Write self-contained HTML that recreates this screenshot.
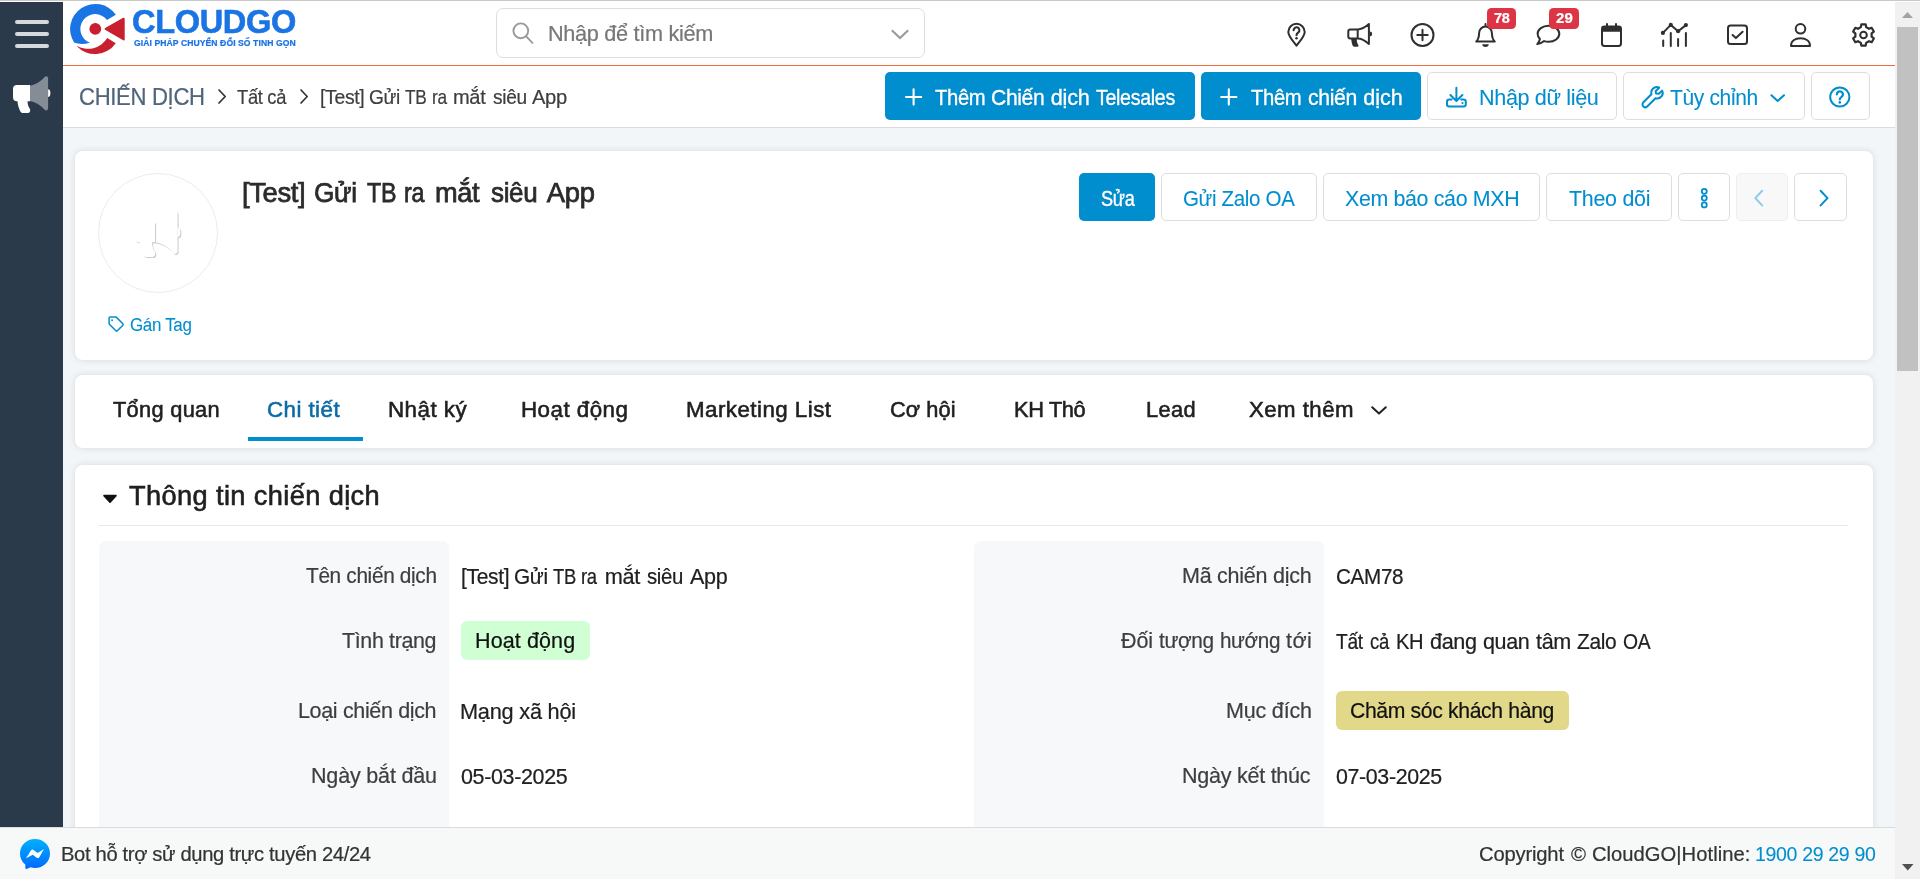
<!DOCTYPE html>
<html lang="vi">
<head>
<meta charset="utf-8">
<title>CloudGO - Chiến dịch</title>
<style>
*{box-sizing:border-box;margin:0;padding:0}
html,body{width:1920px;height:879px;overflow:hidden;background:#f3f6f9}
body{position:relative;font-family:"Liberation Sans",sans-serif}
section,header,nav,footer,aside,main{display:block}
h1,h2{font-weight:400}
a{text-decoration:none}
.a{position:absolute}
.t{position:absolute;white-space:nowrap;display:block;transform-origin:0 50%;-webkit-text-stroke:0.22px currentColor}
.w{display:inline-block;width:0;overflow:visible;white-space:nowrap;transform-origin:0 50%}
svg{position:absolute;overflow:visible}
.card{position:absolute;background:#fff;border-radius:8px;box-shadow:0 0 7px rgba(10,5,0,.12)}
.btn{position:absolute;border-radius:5px;height:48px}
.btn.p{background:#008ecf}
.btn.o{background:#fff;border:1px solid #dedede}
.ic{fill:none;stroke:#2f2f2f;stroke-width:2;stroke-linecap:round;stroke-linejoin:round}
.ib{fill:none;stroke:#008ecf;stroke-width:2;stroke-linecap:round;stroke-linejoin:round}
.dsh{fill:#000;fill-opacity:.2;transform:translate(0.85px,0.85px);filter:blur(0.45px)}
.sh{text-shadow:0 1px 1px rgba(0,40,70,.22)}
.badge{position:absolute;background:#dc3545;border-radius:4.5px}
</style>
</head>
<body>

<!-- page background / content area -->
<main>
  <!-- CARD 1 : record header -->
  <section>
    <div class="card" style="left:75px;top:151px;width:1798px;height:209px"></div>
    <div class="a" style="left:98px;top:173px;width:120px;height:120px;border-radius:50%;border:1px solid #ececec;background:#fff"></div>
    <svg style="left:0;top:0" width="260" height="300" viewBox="0 0 260 300">
      <g transform="translate(134 211) scale(1.24) translate(-13 -75.9)">
        <g class="dsh"><path d="M48.1 89.2 A2.3 3.9 0 0 1 48.1 97 Z"/><path d="M30 85.4 C35.5 84.8 40.5 81.5 44.6 76.9 C45.9 75.4 48.1 76.3 48.1 78.3 V108.3 C48.1 110.3 45.9 111.2 44.6 109.7 C40.5 105.1 35.5 101.8 30 101.2 Z"/></g>
        <g fill="#fff"><path d="M48.1 89.2 A2.3 3.9 0 0 1 48.1 97 Z"/><path d="M30 85.4 C35.5 84.8 40.5 81.5 44.6 76.9 C45.9 75.4 48.1 76.3 48.1 78.3 V108.3 C48.1 110.3 45.9 111.2 44.6 109.7 C40.5 105.1 35.5 101.8 30 101.2 Z"/></g>
        <g class="dsh"><path d="M17 85.1 H30 V101.2 H27.6 C27.4 104 28.3 106.4 29.8 108.7 C30.9 110.5 29.8 113 27.6 113 H23 C21.7 113 20.8 112.3 20.3 111.2 C18.9 108.1 17.7 104.9 17.5 101.2 H17 A4 4 0 0 1 13 97.2 V89.1 A4 4 0 0 1 17 85.1 Z"/></g>
        <g fill="#fff"><path d="M17 85.1 H30 V101.2 H27.6 C27.4 104 28.3 106.4 29.8 108.7 C30.9 110.5 29.8 113 27.6 113 H23 C21.7 113 20.8 112.3 20.3 111.2 C18.9 108.1 17.7 104.9 17.5 101.2 H17 A4 4 0 0 1 13 97.2 V89.1 A4 4 0 0 1 17 85.1 Z"/></g>
      </g>
    </svg>
    <h1 class="t" style="left:241.50px;top:178.80px;font-size:27.4px;line-height:27.4px;color:#2b2b2b;-webkit-text-stroke:0.75px #2b2b2b;transform:scaleX(0.9999);"><span class="w" style="letter-spacing:-0.349px;">[Test]</span> <span class="w" style="letter-spacing:-0.350px;transform:scaleX(0.9548);margin-left:64.03px;">Gửi</span> <span class="w" style="letter-spacing:-0.350px;transform:scaleX(0.8500);margin-left:45.44px;">TB</span> <span class="w" style="letter-spacing:-0.350px;transform:scaleX(0.8500);margin-left:29.54px;">ra</span> <span class="w" style="letter-spacing:-0.350px;transform:scaleX(0.9921);margin-left:23.85px;">mắt</span> <span class="w" style="letter-spacing:-0.350px;transform:scaleX(0.9486);margin-left:47.88px;">siêu</span> <span class="w" style="letter-spacing:-0.301px;margin-left:48.39px;">App</span></h1>
    <svg style="left:0;top:0" width="260" height="345" viewBox="0 0 260 345"><path d="M110.1 317.1 H116.2 L122.9 323.8 A1 1 0 0 1 122.9 325.2 L117.3 330.8 A1 1 0 0 1 115.9 330.8 L109.1 324 V318.1 A1 1 0 0 1 110.1 317.1 Z" fill="none" stroke="#008ecf" stroke-width="1.5" stroke-linejoin="round"/><circle cx="112.1" cy="320.2" r="0.95" fill="#008ecf"/></svg>
    <a class="t" style="left:129.90px;top:315.56px;font-size:18px;line-height:18px;color:#008ecf;-webkit-text-stroke:0.08px #008ecf;letter-spacing:-0.350px;transform:scaleX(0.9425);">Gán Tag</a>
    <div class="btn p" style="left:1079px;top:173px;width:76px"></div><span class="t sh" style="left:1100.60px;top:188.78px;font-size:21.4px;line-height:21.4px;color:#ffffff;-webkit-text-stroke:0.35px #ffffff;letter-spacing:-0.350px;transform:scaleX(0.8500);">Sửa</span>
    <div class="btn o" style="left:1161px;top:173px;width:156px"></div><span class="t" style="left:1182.79px;top:188.78px;font-size:21.4px;line-height:21.4px;color:#008ecf;-webkit-text-stroke:0.08px #008ecf;letter-spacing:-0.350px;transform:scaleX(0.9588);">Gửi Zalo OA</span>
    <div class="btn o" style="left:1323px;top:173px;width:217px"></div><span class="t" style="left:1345.30px;top:188.78px;font-size:21.4px;line-height:21.4px;color:#008ecf;-webkit-text-stroke:0.08px #008ecf;letter-spacing:-0.350px;transform:scaleX(0.9999);">Xem báo cáo MXH</span>
    <div class="btn o" style="left:1546px;top:173px;width:126px"></div><span class="t" style="left:1568.70px;top:188.78px;font-size:21.4px;line-height:21.4px;color:#008ecf;-webkit-text-stroke:0.08px #008ecf;letter-spacing:-0.256px;transform:scaleX(0.9999);">Theo dõi</span>
    <div class="btn o" style="left:1678px;top:173px;width:52px"></div>
    <div class="btn o" style="left:1736px;top:173px;width:52px;background:#f8f8f8;border-color:#eeeeee"></div>
    <div class="btn o" style="left:1794px;top:173px;width:53px"></div>
    <svg style="left:0;top:0" width="1895" height="360" viewBox="0 0 1895 360">
    <circle cx="1704.25" cy="191.3" r="2.5" fill="none" stroke="#008ecf" stroke-width="1.8"/>
    <circle cx="1704.25" cy="198.1" r="2.5" fill="none" stroke="#008ecf" stroke-width="1.8"/>
    <circle cx="1704.25" cy="204.9" r="2.5" fill="none" stroke="#008ecf" stroke-width="1.8"/>
    <path d="M1762.2 190.8 L1755.3 198.1 L1762.2 205.4" fill="none" stroke="#8ccbec" stroke-width="2" stroke-linecap="round" stroke-linejoin="round"/>
    <path class="ib" d="M1820.6 190.8 L1827.5 198.1 L1820.6 205.4"/>
  </svg>
  </section>

  <!-- CARD 2 : tabs -->
  <nav>
    <div class="card" style="left:75px;top:375px;width:1798px;height:73px"></div>
    <a class="t" style="left:113.20px;top:398.54px;font-size:21.8px;line-height:21.8px;color:#202020;-webkit-text-stroke:0.55px #202020;letter-spacing:0.299px;transform:scaleX(0.9999);">Tổng quan</a><a class="t" style="left:267.48px;top:398.54px;font-size:21.8px;line-height:21.8px;color:#0b6aa6;-webkit-text-stroke:0.55px #0b6aa6;letter-spacing:0.450px;transform:scaleX(1.0224);">Chi tiết</a><a class="t" style="left:387.77px;top:398.54px;font-size:21.8px;line-height:21.8px;color:#202020;-webkit-text-stroke:0.55px #202020;letter-spacing:0.450px;transform:scaleX(1.0265);">Nhật ký</a><a class="t" style="left:520.67px;top:398.54px;font-size:21.8px;line-height:21.8px;color:#202020;-webkit-text-stroke:0.55px #202020;letter-spacing:0.450px;transform:scaleX(1.0258);">Hoạt động</a><a class="t" style="left:685.68px;top:398.54px;font-size:21.8px;line-height:21.8px;color:#202020;-webkit-text-stroke:0.55px #202020;letter-spacing:0.450px;transform:scaleX(1.0244);">Marketing List</a><a class="t" style="left:889.80px;top:398.54px;font-size:21.8px;line-height:21.8px;color:#202020;-webkit-text-stroke:0.55px #202020;letter-spacing:0.073px;transform:scaleX(0.9999);">Cơ hội</a><a class="t" style="left:1014.20px;top:398.54px;font-size:21.8px;line-height:21.8px;color:#202020;-webkit-text-stroke:0.55px #202020;letter-spacing:-0.350px;transform:scaleX(0.9999);">KH Thô</a><a class="t" style="left:1146.40px;top:398.54px;font-size:21.8px;line-height:21.8px;color:#202020;-webkit-text-stroke:0.55px #202020;letter-spacing:0.378px;transform:scaleX(0.9999);">Lead</a><a class="t" style="left:1249.20px;top:398.54px;font-size:21.8px;line-height:21.8px;color:#202020;-webkit-text-stroke:0.55px #202020;letter-spacing:0.450px;transform:scaleX(1.0195);">Xem thêm</a>
    <div class="a" style="left:248px;top:437px;width:115px;height:4px;background:#008ecf"></div>
    <svg style="left:1370px;top:404px" width="18" height="12" viewBox="0 0 18 12"><path d="M2.2 3.2 L9 9.6 L15.8 3.2" fill="none" stroke="#222" stroke-width="2" stroke-linecap="round" stroke-linejoin="round"/></svg>
  </nav>

  <!-- CARD 3 : detail block -->
  <section>
    <div class="card" style="left:75px;top:465px;width:1798px;height:420px"></div>
    <svg style="left:102px;top:494px" width="16" height="10" viewBox="0 0 16 10"><path d="M2 1.6 H14 L8 8.2 Z" fill="#111" stroke="#111" stroke-width="1.6" stroke-linejoin="round"/></svg>
    <h2 class="t" style="left:129.00px;top:481.77px;font-size:27.2px;line-height:27.2px;color:#202020;-webkit-text-stroke:0.6px #202020;letter-spacing:0.389px;transform:scaleX(0.9999);">Thông tin chiến dịch</h2>
    <div class="a" style="left:99px;top:525px;width:1749px;height:1px;background:#e6e8ea"></div>
    <div class="a" style="left:99px;top:541px;width:350px;height:300px;background:#f7f8fa;border-radius:7px 7px 0 0"></div>
    <div class="a" style="left:974px;top:541px;width:350px;height:300px;background:#f7f8fa;border-radius:7px 7px 0 0"></div>
    <label class="t" style="left:305.60px;top:565.80px;font-size:21.5px;line-height:21.5px;color:#3e3e3e;letter-spacing:-0.350px;transform:scaleX(0.9685);">Tên chiến dịch</label><label class="t" style="left:342.20px;top:630.80px;font-size:21.5px;line-height:21.5px;color:#3e3e3e;letter-spacing:-0.350px;transform:scaleX(0.9958);">Tình trạng</label><label class="t" style="left:298.10px;top:700.80px;font-size:21.5px;line-height:21.5px;color:#3e3e3e;letter-spacing:-0.348px;transform:scaleX(0.9999);">Loại chiến dịch</label><label class="t" style="left:310.60px;top:765.80px;font-size:21.5px;line-height:21.5px;color:#3e3e3e;letter-spacing:-0.167px;transform:scaleX(0.9999);">Ngày bắt đầu</label>
    <span class="t" style="left:461.03px;top:565.63px;font-size:21.7px;line-height:21.7px;color:#202020;transform:scaleX(0.9999);"><span class="w" style="letter-spacing:-0.350px;transform:scaleX(0.9678);">[Test]</span> <span class="w" style="letter-spacing:-0.350px;transform:scaleX(0.9588);margin-left:47.18px;">Gửi</span> <span class="w" style="letter-spacing:-0.350px;transform:scaleX(0.8500);margin-left:32.83px;">TB</span> <span class="w" style="letter-spacing:-0.350px;transform:scaleX(0.8500);margin-left:22.32px;">ra</span> <span class="w" style="letter-spacing:-0.314px;margin-left:17.32px;">mắt</span> <span class="w" style="letter-spacing:-0.350px;transform:scaleX(0.9397);margin-left:36.67px;">siêu</span> <span class="w" style="letter-spacing:-0.350px;transform:scaleX(0.9940);margin-left:36.07px;">App</span></span>
    <div class="a" style="left:461px;top:621px;width:129px;height:39px;border-radius:6px;background:#d0ffd4"></div><span class="t" style="left:475.40px;top:630.80px;font-size:21.5px;line-height:21.5px;color:#111111;letter-spacing:0.118px;transform:scaleX(0.9999);">Hoạt động</span>
    <span class="t" style="left:459.80px;top:700.63px;font-size:21.7px;line-height:21.7px;color:#202020;letter-spacing:-0.203px;transform:scaleX(0.9999);">Mạng xã hội</span><span class="t" style="left:460.80px;top:765.63px;font-size:21.7px;line-height:21.7px;color:#202020;letter-spacing:-0.350px;transform:scaleX(0.9896);">05-03-2025</span>
    <label class="t" style="left:1182.10px;top:565.80px;font-size:21.5px;line-height:21.5px;color:#3e3e3e;letter-spacing:-0.241px;transform:scaleX(0.9999);">Mã chiến dịch</label><label class="t" style="left:1120.50px;top:630.80px;font-size:21.5px;line-height:21.5px;color:#3e3e3e;transform:scaleX(0.9999);"><span class="w" style="letter-spacing:-0.089px;">Đối</span> <span class="w" style="letter-spacing:-0.350px;transform:scaleX(0.9676);margin-left:32.43px;">tượng</span> <span class="w" style="letter-spacing:-0.350px;transform:scaleX(0.9590);margin-left:54.37px;">hướng</span> <span class="w" style="letter-spacing:0.450px;transform:scaleX(1.0051);margin-left:60.59px;">tới</span></label><label class="t" style="left:1225.90px;top:700.80px;font-size:21.5px;line-height:21.5px;color:#3e3e3e;letter-spacing:-0.182px;transform:scaleX(0.9999);">Mục đích</label><label class="t" style="left:1182.10px;top:765.80px;font-size:21.5px;line-height:21.5px;color:#3e3e3e;letter-spacing:-0.242px;transform:scaleX(0.9999);">Ngày kết thúc</label>
    <span class="t" style="left:1335.75px;top:565.63px;font-size:21.7px;line-height:21.7px;color:#202020;letter-spacing:-0.350px;transform:scaleX(0.9520);">CAM78</span><span class="t" style="left:1336.20px;top:630.63px;font-size:21.7px;line-height:21.7px;color:#202020;transform:scaleX(0.9999);"><span class="w" style="letter-spacing:-0.350px;transform:scaleX(0.8834);">Tất</span> <span class="w" style="letter-spacing:-0.350px;transform:scaleX(0.8530);margin-left:28.17px;">cả</span> <span class="w" style="letter-spacing:-0.350px;transform:scaleX(0.9271);margin-left:20.24px;">KH</span> <span class="w" style="letter-spacing:-0.350px;transform:scaleX(0.9958);margin-left:27.20px;">đang</span> <span class="w" style="letter-spacing:-0.350px;transform:scaleX(0.9914);margin-left:47.07px;">quan</span> <span class="w" style="letter-spacing:-0.350px;transform:scaleX(0.9957);margin-left:46.87px;">tâm</span> <span class="w" style="letter-spacing:-0.350px;transform:scaleX(0.9650);margin-left:35.37px;">Zalo</span> <span class="w" style="letter-spacing:-0.350px;transform:scaleX(0.8912);margin-left:39.88px;">OA</span></span>
    <div class="a" style="left:1336px;top:691px;width:233px;height:39px;border-radius:6px;background:#e2d88a"></div><span class="t" style="left:1350.32px;top:700.80px;font-size:21.5px;line-height:21.5px;color:#111111;letter-spacing:-0.350px;transform:scaleX(0.9841);">Chăm sóc khách hàng</span>
    <span class="t" style="left:1336.20px;top:765.63px;font-size:21.7px;line-height:21.7px;color:#202020;letter-spacing:-0.350px;transform:scaleX(0.9849);">07-03-2025</span>
  </section>
</main>

<!-- BREADCRUMB / ACTION BAR -->
<section>
  <div class="a" style="left:63px;top:66px;width:1832px;height:62px;background:#fff;border-bottom:1px solid #dbdcdd"></div>
  <a class="t" style="left:79.25px;top:86.26px;font-size:23.2px;line-height:23.2px;color:#50647a;letter-spacing:-0.350px;transform:scaleX(0.9539);">CHIẾN DỊCH</a><a class="t" style="left:237.20px;top:86.81px;font-size:20.3px;line-height:20.3px;color:#3e3e3e;letter-spacing:-0.350px;transform:scaleX(0.9037);">Tất cả</a><span class="t" style="left:319.54px;top:86.81px;font-size:20.3px;line-height:20.3px;color:#3e3e3e;transform:scaleX(0.9999);"><span class="w" style="letter-spacing:-0.350px;transform:scaleX(0.9583);">[Test]</span> <span class="w" style="letter-spacing:-0.350px;transform:scaleX(0.9446);margin-left:43.77px;">Gửi</span> <span class="w" style="letter-spacing:-0.350px;transform:scaleX(0.8500);margin-left:30.41px;">TB</span> <span class="w" style="letter-spacing:-0.350px;transform:scaleX(0.8500);margin-left:20.61px;">ra</span> <span class="w" style="letter-spacing:-0.350px;transform:scaleX(0.9885);margin-left:16.02px;">mắt</span> <span class="w" style="letter-spacing:-0.350px;transform:scaleX(0.9433);margin-left:34.05px;">siêu</span> <span class="w" style="letter-spacing:-0.350px;transform:scaleX(0.9941);margin-left:33.46px;">App</span></span>
  <svg style="left:216px;top:88px" width="12" height="17" viewBox="0 0 12 17"><path d="M3 2 L9.2 8.5 L3 15" fill="none" stroke="#333" stroke-width="1.7" stroke-linecap="round" stroke-linejoin="round"/></svg>
  <svg style="left:298.3px;top:88px" width="12" height="17" viewBox="0 0 12 17"><path d="M3 2 L9.2 8.5 L3 15" fill="none" stroke="#333" stroke-width="1.7" stroke-linecap="round" stroke-linejoin="round"/></svg>
  <div class="btn p" style="left:885px;top:72px;width:310px"></div><span class="t sh" style="left:935.00px;top:86.71px;font-size:21.6px;line-height:21.6px;color:#ffffff;-webkit-text-stroke:0.35px #ffffff;transform:scaleX(0.9999);"><span class="w" style="letter-spacing:-0.350px;transform:scaleX(0.9363);">Thêm</span> <span class="w" style="letter-spacing:-0.350px;transform:scaleX(0.9766);margin-left:49.92px;">Chiến</span> <span class="w" style="letter-spacing:-0.177px;margin-left:53.88px;">dịch</span> <span class="w" style="letter-spacing:-0.350px;transform:scaleX(0.9082);margin-left:39.20px;">Telesales</span></span>
  <div class="btn p" style="left:1201px;top:72px;width:220px"></div><span class="t sh" style="left:1250.60px;top:86.71px;font-size:21.6px;line-height:21.6px;color:#ffffff;-webkit-text-stroke:0.35px #ffffff;transform:scaleX(0.9999);"><span class="w" style="letter-spacing:-0.350px;transform:scaleX(0.9363);">Thêm</span> <span class="w" style="letter-spacing:-0.350px;transform:scaleX(0.9809);margin-left:50.90px;">chiến</span> <span class="w" style="letter-spacing:-0.035px;margin-left:49.40px;">dịch</span></span>
  <div class="btn o" style="left:1427px;top:72px;width:190px"></div><span class="t" style="left:1478.50px;top:86.71px;font-size:21.6px;line-height:21.6px;color:#008ecf;-webkit-text-stroke:0.08px #008ecf;letter-spacing:-0.350px;transform:scaleX(0.9999);">Nhập dữ liệu</span>
  <div class="btn o" style="left:1623px;top:72px;width:182px"></div><span class="t" style="left:1669.70px;top:86.71px;font-size:21.6px;line-height:21.6px;color:#008ecf;-webkit-text-stroke:0.08px #008ecf;letter-spacing:-0.350px;transform:scaleX(0.9721);">Tùy chỉnh</span>
  <div class="btn o" style="left:1811px;top:72px;width:59px"></div>
  <svg style="left:0;top:0" width="1895" height="128" viewBox="0 0 1895 128">
    <path d="M906 97 H921.2 M913.6 89.4 V104.6 M1221.2 97 H1236.4 M1228.8 89.4 V104.6" fill="none" stroke="#fff" stroke-width="2.1" stroke-linecap="round"/>
    <path class="ib" d="M1451.6 99.6 H1449.3 A2.3 2.3 0 0 0 1447 101.9 V104.2 A2.3 2.3 0 0 0 1449.3 106.5 H1463.5 A2.3 2.3 0 0 0 1465.8 104.2 V101.9 A2.3 2.3 0 0 0 1463.5 99.6 H1461.2 M1456.4 87.8 V100.6 M1450.4 95 L1456.4 101 L1462.4 95"/><circle cx="1462.5" cy="103.1" r="1.05" fill="#008ecf"/>
    <path class="ib" d="M1659.2 87.7 C1657.5 86.8 1655.3 87 1654 87.9 C1652 89.3 1650.8 91.5 1651.4 94.2 L1643.4 102.3 C1642.2 103.6 1642.2 105.3 1643.4 106.4 C1644.6 107.5 1646.3 107.5 1647.5 106.3 L1655.5 98.2 C1658.2 98.9 1660.6 97.8 1661.9 95.9 C1662.9 94.4 1663 92.3 1662.1 90.6 L1658.9 93.8 L1656 93.5 L1655.7 90.9 Z"/>
    <path class="ib" d="M1771.4 95.2 L1777.7 101 L1784 95.2"/>
    <circle class="ib" cx="1839.8" cy="97" r="9.6"/><path class="ib" style="stroke-width:2.3" d="M1836.9 94.4 A3 3 0 1 1 1841.6 96.8 C1840.5 97.6 1839.8 98.1 1839.8 99.3"/><circle cx="1839.8" cy="102.4" r="1.3" fill="#008ecf"/>
  </svg>
</section>

<!-- TOP BAR -->
<header>
  <div class="a" style="left:0;top:0;width:1920px;height:2px;background:#fff"></div>
  <div class="a" style="left:0;top:0;width:1920px;height:1px;background:#c9c9c9"></div>
  <div class="a" style="left:63px;top:2px;width:1832px;height:64px;background:#fff;border-bottom:1px solid #f26a38"></div>
  <svg style="left:0;top:0" width="140" height="66" viewBox="0 0 140 66">
  <path d="M115.82 14.66 A25.1 25.1 0 0 0 74.11 42.58 Q81 45.3 89.86 42.73 A14.8 14.8 0 1 1 106.98 20.00 Z" fill="#1b74e4"/>
  <path d="M76.40 45.70 A22.8 22.8 0 0 0 107.30 38.10 L115.77 43.23 A25.1 25.1 0 0 1 76.40 45.70 Z" fill="#c8202f"/>
  <circle cx="95.3" cy="28.95" r="5.9" fill="#c8202f"/>
  <path d="M105.6 28.9 L123.7 18.7 L123.7 39.4 Z" fill="#c8202f" stroke="#c8202f" stroke-width="2" stroke-linejoin="round"/>
</svg>
  <span class="t" style="left:132.23px;top:4.72px;font-size:33.4px;line-height:33.4px;color:#1b74e4;font-weight:700;-webkit-text-stroke:0.6px #1b74e4;letter-spacing:-0.350px;transform:scaleX(0.9749);">CLOUDGO</span><span class="t" style="left:133.60px;top:38.52px;font-size:8.6px;line-height:8.6px;color:#1b74e4;font-weight:700;letter-spacing:0.075px;transform:scaleX(0.9999);">GIẢI PHÁP CHUYỂN ĐỔI SỐ TINH GỌN</span>
  <div class="a" style="left:496px;top:8px;width:429px;height:50px;border:1px solid #dedede;border-radius:7px;background:#fff"></div>
  <svg style="left:510px;top:20px" width="26" height="26" viewBox="0 0 26 26"><circle cx="10.8" cy="10.8" r="7.4" fill="none" stroke="#9a9a9a" stroke-width="1.9"/><path d="M16.2 16.4 L22.4 22.8" stroke="#9a9a9a" stroke-width="1.9" stroke-linecap="round"/></svg>
  <svg style="left:889px;top:26px" width="22" height="14" viewBox="0 0 22 14"><path d="M2.8 4.3 L11 12 L19.2 4.3" fill="none" stroke="#9c9c9c" stroke-width="2.2" stroke-linecap="butt" stroke-linejoin="miter"/></svg>
  <span class="t" style="left:547.70px;top:22.63px;font-size:21.7px;line-height:21.7px;color:#777777;letter-spacing:-0.306px;transform:scaleX(0.9999);">Nhập để tìm kiếm</span>
  <svg style="left:0;top:0" width="1895" height="66" viewBox="0 0 1895 66">
    <path class="ic" d="M1296.5 45.6 C1293.6 41.6 1288.3 36.4 1288.3 32 A8.2 8.2 0 0 1 1304.7 32 C1304.7 36.4 1299.4 41.6 1296.5 45.6 Z"/>
    <path class="ic" style="stroke-width:2.1" d="M1293.6 30.2 A2.9 2.9 0 1 1 1298.4 32.4 C1297.2 33.3 1296.5 33.8 1296.5 35.2"/><circle cx="1296.5" cy="38.3" r="1.25" fill="#2f2f2f"/>
    <path class="ic" d="M1357.7 29.4 H1350.3 A2 2 0 0 0 1348.3 31.4 V36.6 A2 2 0 0 0 1350.3 38.6 H1357.7 M1357.7 29.4 V38.6 M1357.7 29.4 C1362 29.4 1365.5 27 1368.9 24 V44 C1365.5 41 1362 38.6 1357.7 38.6"/>
    <path d="M1351.3 39 H1356.8 C1356.6 41.6 1357.3 43.4 1358.3 44.9 C1358.9 45.9 1358.2 46.8 1357.2 46.8 H1354.4 C1353.6 46.8 1353.1 46.4 1352.8 45.7 C1351.9 43.7 1351.3 41.5 1351.3 39 Z" fill="#2f2f2f"/>
    <path d="M1369.8 31.6 A2.4 2.4 0 0 1 1369.8 36.4 Z" fill="#2f2f2f"/>
    <circle class="ic" cx="1422.5" cy="35" r="11"/><path class="ic" d="M1417.3 35 H1427.7 M1422.5 29.8 V40.2"/>
    <path class="ic" d="M1485.5 24 V26 M1476.2 41.6 H1494.8 C1492.6 39.4 1491.9 37 1491.9 33 A6.4 6.4 0 0 0 1479.1 33 C1479.1 37 1478.4 39.4 1476.2 41.6 Z"/>
    <path d="M1482.3 44.3 H1488.7 A3.2 2.7 0 0 1 1482.3 44.3 Z" fill="#2f2f2f"/>
    <path class="ic" d="M1548.6 25.8 C1554.6 25.8 1559.3 29.3 1559.3 33.8 C1559.3 38.3 1554.6 41.8 1548.6 41.8 C1547 41.8 1545.5 41.6 1544.1 41.1 C1542.4 42.6 1540 43.9 1537.3 44.1 C1538.7 42.6 1539.6 40.9 1539.9 39 C1538.6 37.6 1537.6 35.8 1537.6 33.8 C1537.6 29.3 1542.6 25.8 1548.6 25.8 Z"/>
    <rect class="ic" x="1602" y="26.4" width="19" height="19.5" rx="2.4"/><path d="M1602 31.8 V28.6 A2.2 2.2 0 0 1 1604.2 26.4 H1618.8 A2.2 2.2 0 0 1 1621 28.6 V31.8 Z" fill="#2f2f2f"/><path class="ic" d="M1607 24 V27 M1616 24 V27"/>
    <path class="ic" d="M1662.9 32.9 L1670.8 24.9 L1678.1 31.2 L1685.9 25.1 M1663.2 40.6 V45.9 M1670.8 33 V45.9 M1678.1 39 V45.9 M1685.9 33 V45.9"/>
    <circle cx="1662.9" cy="32.9" r="2.1" fill="#2f2f2f"/>
    <circle cx="1670.8" cy="24.9" r="2.1" fill="#2f2f2f"/>
    <circle cx="1678.1" cy="31.2" r="2.1" fill="#2f2f2f"/>
    <circle cx="1685.9" cy="25.1" r="2.1" fill="#2f2f2f"/>
    <rect class="ic" x="1728" y="25.6" width="19" height="18.5" rx="2.6"/><path class="ic" d="M1732.6 35 L1735.9 38.1 L1742.6 31.8"/>
    <circle class="ic" cx="1800.5" cy="28.8" r="4.8"/><path class="ic" d="M1791 45.9 C1791 41 1795 38.3 1800.5 38.3 C1806 38.3 1810 41 1810 45.9 Z"/>
    <path class="ic" style="stroke-width:2.2" d="M1861.33 24.32 L1865.67 24.32 L1866.13 27.13 L1869.00 28.78 L1871.66 27.78 L1873.84 31.54 L1871.63 33.35 L1871.63 36.65 L1873.84 38.46 L1871.66 42.22 L1869.00 41.22 L1866.13 42.87 L1865.67 45.68 L1861.33 45.68 L1860.87 42.87 L1858.00 41.22 L1855.34 42.22 L1853.16 38.46 L1855.37 36.65 L1855.37 33.35 L1853.16 31.54 L1855.34 27.78 L1858.00 28.78 L1860.87 27.13 Z"/><circle class="ic" cx="1863.5" cy="35" r="3.3"/>
  </svg>
  <div class="badge" style="left:1487px;top:8px;width:29px;height:21px"></div><span class="t" style="left:1493.75px;top:10.05px;font-size:15px;line-height:15px;color:#ffffff;font-weight:700;letter-spacing:-0.350px;transform:scaleX(0.9661);">78</span>
  <div class="badge" style="left:1549px;top:8px;width:30px;height:21px"></div><span class="t" style="left:1555.60px;top:10.05px;font-size:15px;line-height:15px;color:#ffffff;font-weight:700;letter-spacing:0.058px;transform:scaleX(0.9999);">29</span>
</header>

<!-- SIDEBAR -->
<aside>
  <div class="a" style="left:0;top:2px;width:63px;height:825px;background:#2b3a4a"></div>
  <div class="a" style="left:14.5px;top:20px;width:34.5px;height:4px;border-radius:2px;background:#d6d9dc"></div>
  <div class="a" style="left:14.5px;top:32px;width:34.5px;height:4px;border-radius:2px;background:#d6d9dc"></div>
  <div class="a" style="left:14.5px;top:44px;width:34.5px;height:4px;border-radius:2px;background:#d6d9dc"></div>
  <svg style="left:0;top:66px" width="63" height="62" viewBox="0 66 63 62">
    <path d="M30 85.4 C35.5 84.8 40.5 81.5 44.6 76.9 C45.9 75.4 48.1 76.3 48.1 78.3 V108.3 C48.1 110.3 45.9 111.2 44.6 109.7 C40.5 105.1 35.5 101.8 30 101.2 Z" fill="#848c96"/>
    <path d="M17 85.1 H30 V101.2 H27.6 C27.4 104 28.3 106.4 29.8 108.7 C30.9 110.5 29.8 113 27.6 113 H23 C21.7 113 20.8 112.3 20.3 111.2 C18.9 108.1 17.7 104.9 17.5 101.2 H17 A4 4 0 0 1 13 97.2 V89.1 A4 4 0 0 1 17 85.1 Z" fill="#fff"/>
    <path d="M48.1 89.2 A2.3 3.9 0 0 1 48.1 97 Z" fill="#fff"/>
  </svg>
</aside>

<!-- FOOTER -->
<footer>
  <div class="a" style="left:0;top:827px;width:1895px;height:52px;background:#f7f8f8;border-top:1px solid #d9dcde"></div>
  <svg style="left:0;top:828px" width="70" height="51" viewBox="0 828 70 51">
    <defs><linearGradient id="mg" x1="0" y1="0" x2="0" y2="1"><stop offset="0" stop-color="#00b2ff"/><stop offset="1" stop-color="#0068ff"/></linearGradient></defs>
    <path d="M35 838.9 C43.4 838.9 50 845.2 50 853.4 C50 861.6 43.4 867.9 35 867.9 C33.4 867.9 31.9 867.7 30.5 867.3 L26.6 869 C26 869.3 25.4 868.8 25.4 868.2 L25.3 864.6 C22 861.9 20 857.9 20 853.4 C20 845.2 26.6 838.9 35 838.9 Z" fill="url(#mg)"/>
    <path d="M25.95 858.2 L30.9 850.4 C31.5 849.5 32.7 849.3 33.5 849.9 L37.7 853 L44 849.1 L39.3 857.2 C38.7 858.1 37.5 858.3 36.7 857.7 L32.75 854.8 Z" fill="#fff"/>
  </svg>
  <span class="t" style="left:60.90px;top:843.80px;font-size:20.2px;line-height:20.2px;color:#333333;letter-spacing:-0.350px;transform:scaleX(0.9999);">Bot hỗ trợ sử dụng trực tuyến 24/24</span><span class="t" style="left:1479.10px;top:843.70px;font-size:20.2px;line-height:20.2px;color:#333333;transform:scaleX(0.9999);"><span class="w" style="letter-spacing:-0.169px;">Copyright</span> <span class="w" style="letter-spacing:0.000px;transform:scaleX(1.0089);margin-left:86.49px;">©</span> <span class="w" style="letter-spacing:0.044px;margin-left:15.19px;">CloudGO|Hotline:</span></span><a class="t" style="left:1754.93px;top:843.70px;font-size:20.2px;line-height:20.2px;color:#008ecf;-webkit-text-stroke:0.08px #008ecf;letter-spacing:-0.350px;transform:scaleX(0.9671);">1900 29 29 90</a>
</footer>

<!-- SCROLLBAR -->
<div class="a" style="left:1895px;top:2px;width:25px;height:877px;background:#f1f1f1"></div>
<div class="a" style="left:1897px;top:27px;width:21px;height:344px;background:#c1c1c1"></div>
<svg style="left:1895px;top:2px" width="25" height="25" viewBox="0 0 25 25"><path d="M7 16 L12.5 10 L18 16 Z" fill="#a3a3a3"/></svg>
<svg style="left:1895px;top:854px" width="25" height="25" viewBox="0 0 25 25"><path d="M7 10 L18.5 10 L12.75 16.5 Z" fill="#505050"/></svg>

</body>
</html>
